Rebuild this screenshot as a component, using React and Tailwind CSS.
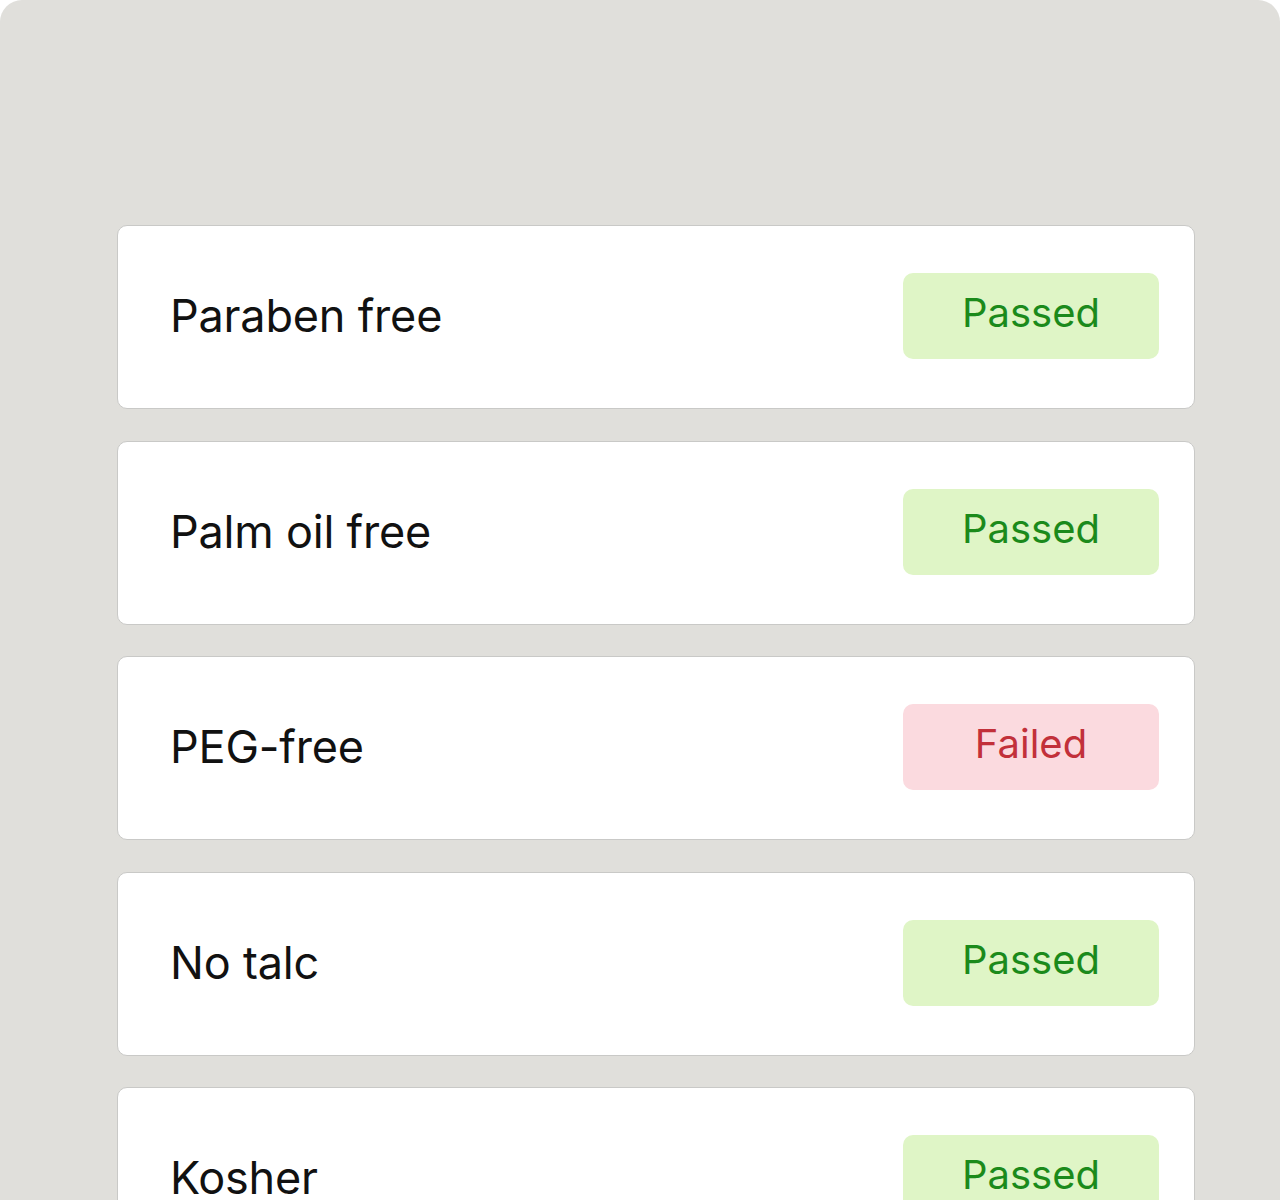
import React from "react";

const items = [
  { label: "Paraben free", ok: true },
  { label: "Palm oil free", ok: true },
  { label: "PEG-free", ok: false },
  { label: "No talc", ok: true },
  { label: "Kosher", ok: true },
];

export default function App() {
  return (
    <div className="w-[1280px] h-[1200px] bg-white overflow-hidden" style={{ fontFamily: "Inter, 'Noto Sans', sans-serif" }}>
      <div className="h-full bg-[#e0dfdb] rounded-t-[22px] pt-[225px] pl-[117px]">
        <div className="w-[1078px] flex flex-col gap-[31.5px]">
          {items.map((it) => (
            <div
              key={it.label}
              className="h-[184px] shrink-0 bg-white border border-[#c9c9c7] rounded-[10px] flex items-center justify-between pl-[52px] pr-[35px]"
            >
              <span className="text-[45px] leading-none text-[#111111] tracking-[-0.2px] -mt-[3px]">{it.label}</span>
              <span
                className={
                  it.ok
                    ? "w-[256px] h-[86px] rounded-[10px] bg-[#dff5c6] text-[#1b8a1b] flex items-center justify-center text-[40px] leading-none -mt-[2px] pb-[6px]"
                    : "w-[256px] h-[86px] rounded-[10px] bg-[#fbdadf] text-[#c2303a] flex items-center justify-center text-[40px] leading-none -mt-[2px] pb-[6px]"
                }
              >
                {it.ok ? "Passed" : "Failed"}
              </span>
            </div>
          ))}
        </div>
      </div>
    </div>
  );
}
